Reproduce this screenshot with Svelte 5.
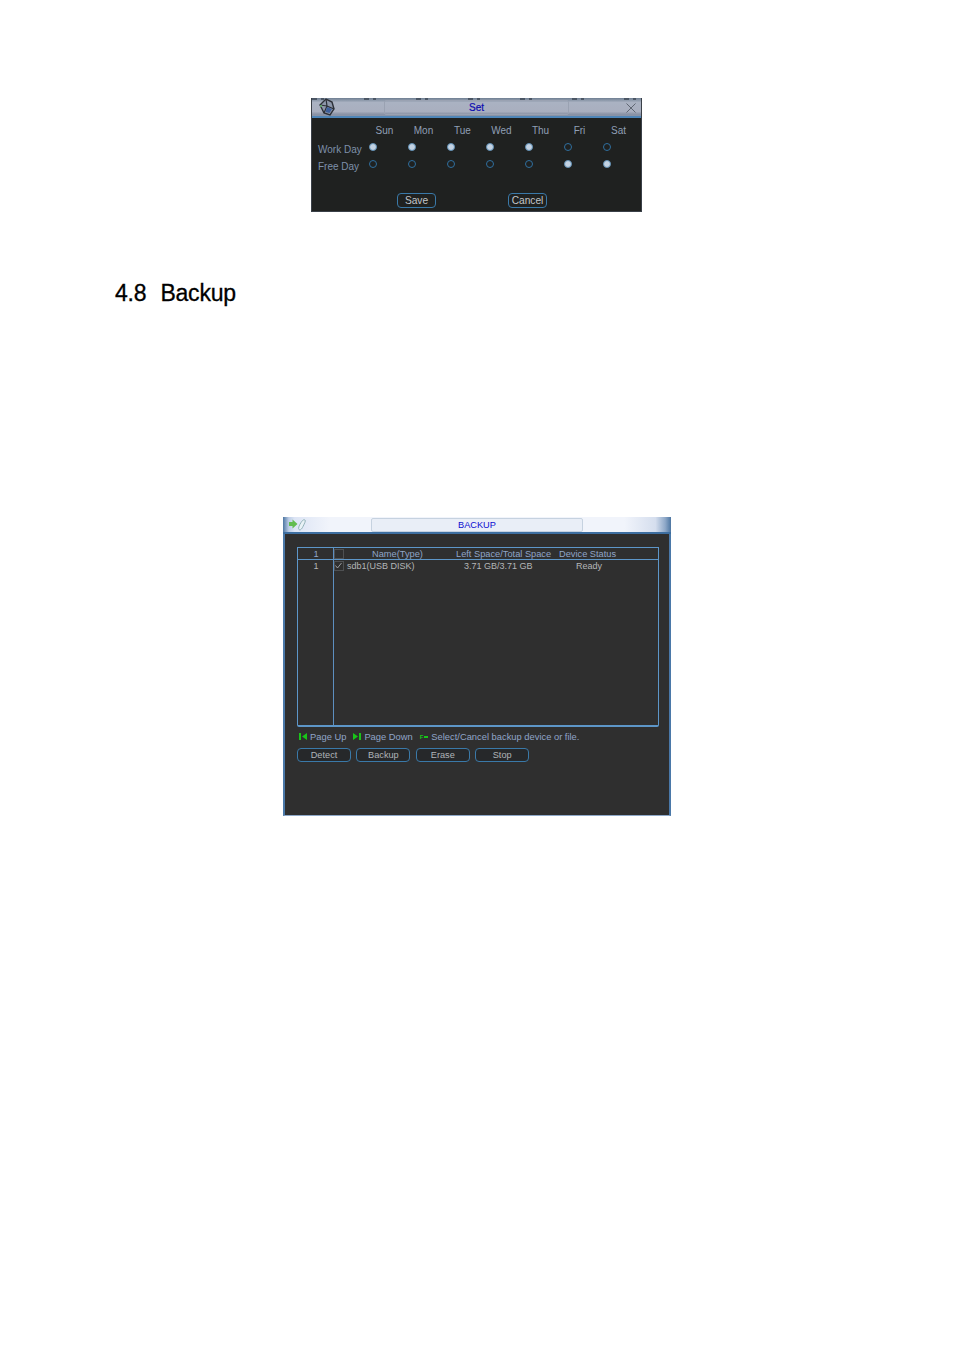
<script>
  const days = ['Sun', 'Mon', 'Tue', 'Wed', 'Thu', 'Fri', 'Sat'];
  const rows = [
    { label: 'Work Day', on: [1, 1, 1, 1, 1, 0, 0] },
    { label: 'Free Day', on: [0, 0, 0, 0, 0, 1, 1] }
  ];
  const actions = ['Detect', 'Backup', 'Erase', 'Stop'];
</script>

<div class="page">
  <section class="set">
    <header class="set-title">
      <div class="specks"></div>
      <svg class="set-logo" viewBox="0 0 18 18" width="18" height="18" aria-hidden="true">
        <path d="M2 7 8 1l6 3 2 7-4 6-6-2z" fill="#8d97aa" stroke="#2c3038" stroke-width="1.4"/>
        <path d="M8 1l1 7 7 3M9 8l-3 7M9 8 2 7" fill="none" stroke="#2c3038" stroke-width="1.2"/>
        <path d="M9 9l5 2-2.500 4-4-1z" fill="#3d5f9c"/>
        <circle cx="3" cy="8" r="1" fill="#6fbf73"/>
      </svg>
      <div class="set-plate">Set</div>
      <svg class="close" viewBox="0 0 10 10" width="10" height="10" aria-hidden="true">
        <path d="M.5.500l9 9M9.500.500l-9 9" stroke="#5f6672" stroke-width="1" fill="none"/>
      </svg>
    </header>
    <div class="set-body">
      <div class="day-row">
        {#each days as d}<span>{d}</span>{/each}
      </div>
      {#each rows as r}
        <div class="radio-row">
          <span class="row-label">{r.label}</span>
          <div class="radios">
            {#each r.on as v}<i class="radio" class:on={v}></i>{/each}
          </div>
        </div>
      {/each}
      <div class="set-actions">
        <button class="btn small">Save</button>
        <button class="btn small">Cancel</button>
      </div>
    </div>
  </section>

  <h2><span>4.8</span><span>Backup</span></h2>

  <section class="backup">
    <header class="backup-title">
      <svg class="backup-logo" viewBox="0 0 18 12" width="18" height="12" aria-hidden="true">
        <path d="M0 3h3.500V.5L8.500 5l-5 4.500V7H0z" fill="#62bd4f"/>
        <path d="M10 10.500c-1-1 0-4 2-7s3-3 4-2.500-.5 3.500-2 6.500-3 4-4 3z" fill="#e9f2f6" stroke="#7ea3a8" stroke-width=".8"/>
      </svg>
      <div class="backup-plate">BACKUP</div>
    </header>
    <div class="backup-body">
      <div class="table">
        <div class="thead">
          <span class="c-num">1</span>
          <span class="c-check"><i class="box"></i></span>
          <span class="c-name center">Name(Type)</span>
          <span class="c-space">Left Space/Total Space</span>
          <span class="c-status">Device Status</span>
        </div>
        <div class="tbody">
          <div class="trow">
            <span class="c-num">1</span>
            <span class="c-check">
              <i class="box checked">
                <svg viewBox="0 0 9 9" width="9" height="9" aria-hidden="true"><path d="M1.500 4.500l2 2.500L7.500 2" fill="none" stroke="#b4b8bc" stroke-width=".8"/></svg>
              </i>
            </span>
            <span class="c-name">sdb1(USB DISK)</span>
            <span class="c-space data">3.71 GB/3.71 GB</span>
            <span class="c-status data">Ready</span>
          </div>
        </div>
      </div>
      <div class="legend">
        <svg viewBox="0 0 8 7" width="8" height="7" aria-hidden="true"><path d="M0 0h2v7H0zM8 0v7L3 3.500z" fill="#19c419"/></svg>
        <span class="l1">Page Up</span>
        <svg viewBox="0 0 8 7" width="8" height="7" aria-hidden="true"><path d="M6 0h2v7H6zM0 0v7l5-3.500z" fill="#19c419"/></svg>
        <span class="l2">Page Down</span>
        <b>F</b><em></em>
        <span>Select/Cancel backup device or file.</span>
      </div>
      <div class="backup-actions">
        {#each actions as a}<button class="btn wide">{a}</button>{/each}
      </div>
    </div>
  </section>
</div>

<style>
  :global(body) {
    margin: 0;
    background: #fff;
  }
  .page {
    width: 954px;
    height: 1350px;
    padding-top: 98px;
    box-sizing: border-box;
    overflow: hidden;
    font-family: "Liberation Sans", Arial, sans-serif;
  }
  header {
    position: relative;
    box-sizing: border-box;
  }

  /* Set dialog */
  .set {
    width: 331px;
    height: 114px;
    margin-left: 311px;
    box-sizing: border-box;
    background: #1f2120;
    border: 1px solid #3a4048;
    border-top: 0;
  }
  .set-title {
    height: 20px;
    display: flex;
    justify-content: center;
    padding-top: 2px;
    background: linear-gradient(#6f7f92 0, #aab2c2 25%, #a9afbf 75%, #8a93a6 90%);
    border-bottom: 2px solid #4f86b8;
  }
  .specks {
    position: absolute;
    inset: 0 0 auto 0;
    height: 2px;
    background: repeating-linear-gradient(90deg, #3b4552 0 5px, transparent 5px 9px, #3b4552 9px 12px, transparent 12px 52px);
    opacity: .75;
  }
  .set-logo {
    position: absolute;
    left: 6px;
    top: 0;
  }
  .set-plate {
    width: 183px;
    height: 13px;
    border: 1px solid #9aa2b2;
    border-radius: 2px;
    text-align: center;
    font-size: 10px;
    line-height: 13px;
    color: #0b0bb0;
    -webkit-text-stroke: .2px #0b0bb0;
  }
  .close {
    position: absolute;
    right: 5px;
    top: 5px;
  }
  .set-body {
    padding-top: 7px;
  }
  .day-row {
    display: grid;
    grid-template-columns: repeat(7, 39px);
    margin-left: 53px;
    font-size: 10px;
    line-height: 12px;
    color: #8f9fb5;
    text-align: center;
  }
  .radio-row {
    display: flex;
    height: 17px;
    color: #7e90aa;
    font-size: 10px;
    line-height: 12px;
  }
  .radio-row:nth-child(2) {
    margin-top: 5.500px;
  }
  .row-label {
    width: 57px;
    padding: 1px 0 0 6px;
    box-sizing: border-box;
    white-space: nowrap;
  }
  .radios {
    display: grid;
    grid-template-columns: repeat(7, 39px);
  }
  .radio {
    width: 8px;
    height: 8px;
    box-sizing: border-box;
    border: 1px solid #2f6f9f;
    border-radius: 50%;
    margin-left: 1px;
  }
  .radio.on {
    background: #c3d2e2;
    border-color: #5f8fb5;
  }
  .set-actions {
    display: flex;
    gap: 72px;
    margin: 16.500px 0 0 85px;
  }

  .btn {
    box-sizing: border-box;
    background: #26282a;
    border: 1px solid #3a79a8;
    border-radius: 4px;
    color: #c2c6ca;
    font-family: inherit;
    padding: 0;
    text-align: center;
  }
  .btn.small {
    width: 39px;
    height: 15px;
    font-size: 10.200px;
    line-height: 13px;
    background: #1f2120;
  }
  .btn.wide {
    width: 54px;
    height: 14px;
    font-size: 9.200px;
    line-height: 11px;
    color: #b0b4b8;
  }

  h2 {
    display: flex;
    gap: 14px;
    margin: 68px 0 0 115px;
    font-size: 23px;
    line-height: 26px;
    font-weight: 400;
    letter-spacing: -.2px;
    color: #000;
    -webkit-text-stroke: .3px #000;
  }

  /* Backup dialog */
  .backup {
    width: 388px;
    height: 299px;
    margin: 211px 0 0 283px;
    box-sizing: border-box;
    background: #2f2f2f;
    border: 1px solid #4a78a8;
    border-width: 0 2px 1px;
    border-bottom-color: #8ea8c8;
  }
  .backup-title {
    height: 17px;
    display: flex;
    justify-content: center;
    margin: 0 -2px;
    background: linear-gradient(90deg, #4d76a2 0, #bccde6 1.500%, #dde5f5 3%, #f1f4fb 12%, #f1f4fb 88%, #d5deee 96%, #8ea8c8 98.500%, #4d76a2 100%);
    border-bottom: 2px solid #3d6ea0;
    padding: 1px 0 0 0;
  }
  .backup-logo {
    position: absolute;
    left: 6px;
    top: 2px;
  }
  .backup-plate {
    width: 210px;
    height: 12px;
    border: 1px solid #c6d2e0;
    border-radius: 2px;
    background: #e9eef7;
    text-align: center;
    font-size: 9.200px;
    line-height: 12px;
    color: #0b0bd0;
  }
  .backup-body {
    padding: 13px 10px 0 12px;
  }
  .table {
    height: 180px;
    box-sizing: border-box;
    border: 1px solid #5d96c8;
    border-bottom-width: 2px;
    border-radius: 0 0 2px 2px;
    background: linear-gradient(#5d8fc0, #5d8fc0) 35px 0 / 1px 100% no-repeat;
    display: flex;
    flex-direction: column;
    line-height: 12px;
  }
  .thead, .trow {
    display: grid;
    grid-template-columns: 36px 13px 100px 108px 1fr;
    white-space: nowrap;
  }
  .thead {
    height: 12px;
    font-size: 9.250px;
    border-bottom: 1px solid #5d96c8;
    color: #8fa5c8;
    box-sizing: border-box;
  }
  .trow {
    font-size: 9px;
    color: #b4b6b8;
    height: 12px;
  }
  .c-num {
    text-align: center;
  }
  .c-check {
    display: flex;
    align-items: center;
  }
  .box {
    display: block;
    width: 10px;
    height: 10px;
    box-sizing: border-box;
    border: 1px solid #4e5052;
    position: relative;
  }
  .box svg {
    position: absolute;
    left: -1px;
    top: -1px;
  }
  .c-name.center {
    padding-left: 25px;
  }
  .c-space {
    padding-left: 9px;
  }
  .c-space.data {
    padding-left: 17px;
  }
  .c-status {
    padding-left: 4px;
  }
  .c-status.data {
    padding-left: 21px;
  }
  .legend {
    display: flex;
    align-items: center;
    height: 12px;
    margin-top: 3.500px;
    padding-left: 2px;
    font-size: 9.350px;
    color: #8fa5c8;
    white-space: nowrap;
  }
  .legend svg {
    margin-right: 3px;
  }
  .legend .l1 {
    margin-right: 7px;
  }
  .legend .l2 {
    margin-right: 7px;
  }
  .legend b {
    color: #19c419;
    font-size: 6px;
    font-weight: 700;
  }
  .legend em {
    display: block;
    width: 4px;
    height: 2px;
    background: #19c419;
    margin: 0 3px 0 1px;
  }
  .backup-actions {
    display: flex;
    gap: 5.400px;
    margin-top: 5.500px;
  }
</style>
